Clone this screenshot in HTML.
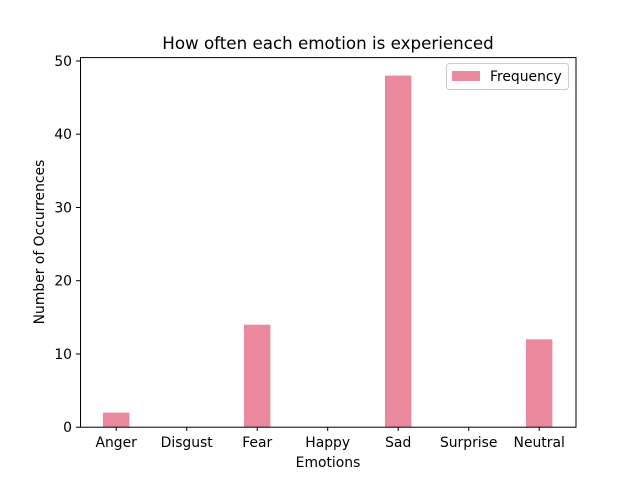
<!DOCTYPE html>
<html><head><style>html,body{margin:0;padding:0;background:#fff}svg{display:block}</style></head><body>
<svg width="640" height="480" xmlns="http://www.w3.org/2000/svg" font-family="'DejaVu Sans', 'Liberation Sans', sans-serif" font-size="13.9">
<rect width="640" height="480" fill="#fff"/>
<g fill="#ea889d">
<rect x="103" y="412.6" width="26.4" height="14.6"/>
<rect x="244" y="324.7" width="26.4" height="102.5"/>
<rect x="385" y="75.6" width="26.4" height="351.6"/>
<rect x="526" y="339.3" width="26.4" height="87.9"/>
</g>
<rect x="80.5" y="57.6" width="495.5" height="369.6" fill="none" stroke="#000" stroke-width="1"/>
<g stroke="#000" stroke-width="1">
<line x1="76" x2="80" y1="427.2" y2="427.2"/>
<line x1="76" x2="80" y1="354" y2="354"/>
<line x1="76" x2="80" y1="280.7" y2="280.7"/>
<line x1="76" x2="80" y1="207.5" y2="207.5"/>
<line x1="76" x2="80" y1="134.2" y2="134.2"/>
<line x1="76" x2="80" y1="61" y2="61"/>
<line x1="116.2" x2="116.2" y1="427.2" y2="431"/>
<line x1="186.7" x2="186.7" y1="427.2" y2="431"/>
<line x1="257.2" x2="257.2" y1="427.2" y2="431"/>
<line x1="327.7" x2="327.7" y1="427.2" y2="431"/>
<line x1="398.2" x2="398.2" y1="427.2" y2="431"/>
<line x1="468.7" x2="468.7" y1="427.2" y2="431"/>
<line x1="539.2" x2="539.2" y1="427.2" y2="431"/>
</g>
<g text-anchor="end">
<text x="72" y="432">0</text>
<text x="72" y="359">10</text>
<text x="72" y="285.5">20</text>
<text x="72" y="212.5">30</text>
<text x="72" y="139">40</text>
<text x="72" y="66">50</text>
</g>
<g text-anchor="middle">
<text x="116.2" y="447">Anger</text>
<text x="186.7" y="447">Disgust</text>
<text x="257.2" y="447">Fear</text>
<text x="327.7" y="447">Happy</text>
<text x="398.2" y="447">Sad</text>
<text x="468.7" y="447">Surprise</text>
<text x="539.2" y="447">Neutral</text>
<text x="328" y="467">Emotions</text>
<text x="328" y="49" font-size="16.7">How often each emotion is experienced</text>
<text transform="translate(44,242) rotate(-90)">Number of Occurrences</text>
</g>
<rect x="446.5" y="63.5" width="122" height="26" rx="3" fill="#fff" stroke="#ccc"/>
<rect x="452" y="71" width="28" height="10" fill="#ea889d"/>
<text x="490" y="81">Frequency</text>
</svg>
</body></html>
